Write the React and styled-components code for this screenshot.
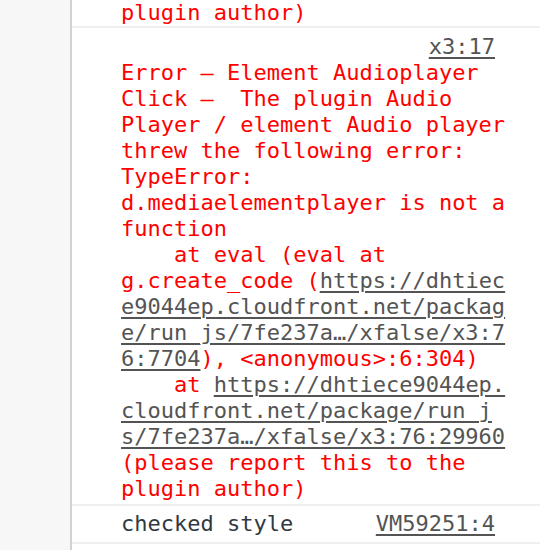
import React from "react";
import styled, { createGlobalStyle } from "styled-components";

const Global = createGlobalStyle`
  html, body { margin: 0; padding: 0; background: #ffffff; }
  body { font-family: "DejaVu Sans Mono", "Liberation Mono", monospace; }
`;

const Page = styled.div`
  display: flex;
  width: 540px;
  height: 550px;
  overflow: hidden;
`;

const Sidebar = styled.div`
  width: 70px;
  flex: none;
  background: #f7f7f7;
  border-right: 2px solid #d2d2d2;
`;

const Console = styled.div`
  flex: 1;
  min-width: 0;
  display: flex;
  flex-direction: column;
  background: #ffffff;
`;

const Message = styled.div`
  padding: ${(p) => p.$pad || "0"} 45px ${(p) => p.$padBottom || "0"} 49px;
  border-bottom: 2px solid #efefef;
  font-size: 22px;
  line-height: 26px;
  color: ${(p) => (p.$error ? "#ff0000" : "#303942")};
`;

const Line = styled.div`
  white-space: pre;
  height: 26px;
`;

const RowLine = styled.div`
  display: flex;
  justify-content: space-between;
  white-space: pre;
  height: 26px;
`;

const SourceLine = styled.div`
  text-align: right;
  height: 26px;
`;

const Link = styled.span`
  color: #545454;
  text-decoration: underline;
  text-decoration-thickness: 2px;
  text-underline-offset: 3px;
`;

export default function App() {
  return (
    <>
      <Global />
      <Page>
        <Sidebar />
        <Console>
          <Message $error>
            <Line>plugin author)</Line>
          </Message>
          <Message $error $pad="6px" $padBottom="2px">
            <SourceLine>
              <Link>x3:17</Link>
            </SourceLine>
            <Line>Error – Element Audioplayer</Line>
            <Line>Click –  The plugin Audio</Line>
            <Line>Player / element Audio player</Line>
            <Line>threw the following error:</Line>
            <Line>TypeError:</Line>
            <Line>d.mediaelementplayer is not a</Line>
            <Line>function</Line>
            <Line>    at eval (eval at</Line>
            <Line>
              g.create_code (<Link>https://dhtiec</Link>
            </Line>
            <Line>
              <Link>e9044ep.cloudfront.net/packag</Link>
            </Line>
            <Line>
              <Link>e/run_js/7fe237a…/xfalse/x3:7</Link>
            </Line>
            <Line>
              <Link>6:7704</Link>), &lt;anonymous&gt;:6:304)
            </Line>
            <Line>
              {"    at "}
              <Link>https://dhtiece9044ep.</Link>
            </Line>
            <Line>
              <Link>cloudfront.net/package/run_j</Link>
            </Line>
            <Line>
              <Link>s/7fe237a…/xfalse/x3:76:29960</Link>
            </Line>
            <Line>(please report this to the</Line>
            <Line>plugin author)</Line>
          </Message>
          <Message $pad="5px" $padBottom="5px">
            <RowLine>
              <span>checked style</span>
              <Link>VM59251:4</Link>
            </RowLine>
          </Message>
        </Console>
      </Page>
    </>
  );
}
